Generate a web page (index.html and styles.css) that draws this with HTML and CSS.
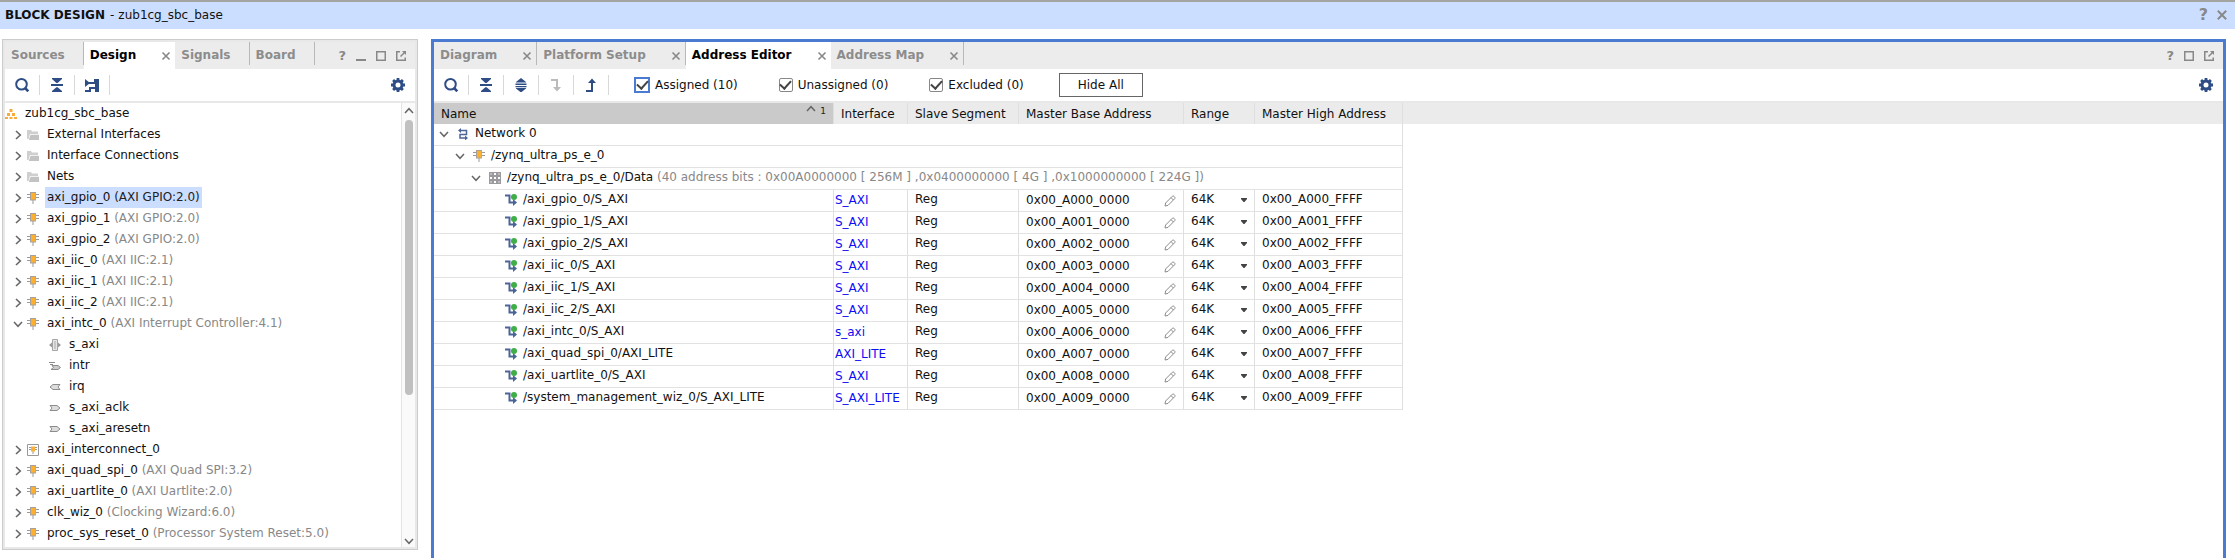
FILE: index.html
```html
<!DOCTYPE html>
<html lang="en">
<head>
<meta charset="utf-8">
<title>Block Design - zub1cg_sbc_base</title>
<link rel="stylesheet" href="styles.css">
</head>
<body>
<svg class="sprite" aria-hidden="true">
  <symbol id="search" viewBox="0 0 14 14"><circle cx="6.5" cy="6.3" r="5.3" fill="none" stroke="currentColor" stroke-width="2"/><path d="M10 10l3.3 3.3" stroke="currentColor" stroke-width="2.6"/></symbol>
  <symbol id="collapse" viewBox="0 0 14 14"><path d="M2 0h10v1L7.6 5H6.4L2 1zM1 6h12v2H1zM6.4 9.300h1.200L12 13v1H2v-1z" fill="currentColor"/></symbol>
  <symbol id="expand" viewBox="0 0 14 14"><path d="M7 0l5 4v.6H2V4zM1.500 5.500h11v1.400h-11zM1.500 8h11v1.300h-11zM2 10h10v.4L7 14.500 2 10.400z" fill="currentColor"/></symbol>
  <symbol id="hier" viewBox="0 0 14 14"><path d="M0 1l5 4-5 4zM1 4h9v2H1zM9 1h5v13h-4V6H9zM0 12h4V9h6v2H6v3H0z" fill="currentColor"/></symbol>
  <symbol id="down" viewBox="0 0 14 14"><path d="M2 1h7v8h3l-4 4.500L4 9h3V3H2z" fill="currentColor"/></symbol>
  <symbol id="up" viewBox="0 0 14 14"><path d="M2 14h7V5h3L8 .5 4 5h3v7H2z" fill="currentColor"/></symbol>
  <symbol id="gear" viewBox="0 0 14 14"><circle cx="7" cy="7" r="4" fill="none" stroke="currentColor" stroke-width="3"/><path d="M7 0v2.500M7 11.500V14M0 7h2.500M11.500 7H14M2.100 2.100l1.700 1.700M10.200 10.200l1.700 1.700M2.100 11.900l1.700-1.700M10.200 3.800l1.700-1.700" stroke="currentColor" stroke-width="2.800"/></symbol>
  <symbol id="x" viewBox="0 0 10 10"><path d="M1.500 1.500l7 7M8.500 1.500l-7 7" fill="none" stroke="currentColor" stroke-width="1.600"/></symbol>
  <symbol id="min" viewBox="0 0 10 10"><path d="M0 8h10v2H0z" fill="currentColor"/></symbol>
  <symbol id="max" viewBox="0 0 10 10"><path d="M.75.75h8.500v8.500H.75z" fill="none" stroke="currentColor" stroke-width="1.500"/></symbol>
  <symbol id="float" viewBox="0 0 10 10"><path d="M4 .75H.75v8.500h8.500V6.500M4.500 5.500L8.500 1.500" fill="none" stroke="currentColor" stroke-width="1.500"/><path d="M6 0h4v4z" fill="currentColor"/></symbol>
  <symbol id="right" viewBox="0 0 10 10"><path d="M3 1l4.300 4L3 9" fill="none" stroke="currentColor" stroke-width="1.600"/></symbol>
  <symbol id="open" viewBox="0 0 10 10"><path d="M1 3l4 4.300L9 3" fill="none" stroke="currentColor" stroke-width="1.500"/></symbol>
  <symbol id="root" viewBox="0 0 12 12"><path d="M4.500 1h3v3h-3zM2 5h3v3H2zM7 5h3v3H7zM0 9h3v2H0zM4.500 9h3v2h-3zM9 9h3v2H9z" fill="#f9ab3a"/></symbol>
  <symbol id="folder" viewBox="0 0 12 12"><path d="M0 1h4l1 1.500h6V5H3L1.500 10H0z" fill="#cfcfcf"/><path d="M3.500 5.800H12V11H1.800z" fill="#c3c3c3"/></symbol>
  <symbol id="ip" viewBox="0 0 12 12"><path d="M0 2.500h12M0 5.500h12" stroke="#9a9a9a"/><path d="M5.500 8h1v4h-1z" fill="#9a9a9a"/><path d="M3 0h6v8.500H3z" fill="#a8a09a"/><path d="M4 1h4.500v6.500H4z" fill="#fdb02f"/></symbol>
  <symbol id="ipbox" viewBox="0 0 12 12"><path d="M.5.5h11v11H.5z" fill="#fff" stroke="#999"/><path d="M2 3.500h8M2 5.500h8M6 7v3" stroke="#999"/><path d="M4 2.500h4v5H4z" fill="#fbb03b"/></symbol>
  <symbol id="bus" viewBox="0 0 12 12"><path d="M0 6l3-2.500v5zM12 6L9 3.500v5z" fill="#999"/><path d="M3.500.5h5v11h-5z" fill="#e6e6e6" stroke="#a4a4a4"/><path d="M5.500 2h1v8h-1z" fill="#aaa"/></symbol>
  <symbol id="intr" viewBox="0 0 12 12"><path d="M0 2.500h6M1 4.500h3M2 9.500h7l2.500-2-2.500-2H3l1.500 2z" fill="#ccc" stroke="#8c8c8c"/></symbol>
  <symbol id="out" viewBox="0 0 12 12"><path d="M11 3.500H4L1 6l3 2.500h7L9 6z" fill="#ddd" stroke="#8c8c8c"/></symbol>
  <symbol id="in" viewBox="0 0 12 12"><path d="M1 3.500h7L11 6 8 8.500H1L3 6z" fill="#ddd" stroke="#8c8c8c"/></symbol>
  <symbol id="net" viewBox="0 0 12 12"><path d="M3 2.500h6.500v4H3v3.500h7" fill="none" stroke="#4d6797" stroke-width="1.500"/><path d="M4 0v5L1 2.500zM8 7.500v5l3-2.500z" fill="#4d6797"/></symbol>
  <symbol id="grid" viewBox="0 0 12 12"><path d="M0 0h12v12H0z" fill="#9b9b9f"/><path d="M5 1h2v2H5zM1 5h2v2H1zM5 5h2v2H5zM9 5h2v2H9zM5 9h2v2H5z" fill="#fff"/><path d="M1 1h2v2H1zM9 1h2v2H9zM1 9h2v2H1zM9 9h2v2H9z" fill="#bbb"/></symbol>
  <symbol id="seg" viewBox="0 0 12 12"><path d="M0 1.500h4.500v7H9" fill="none" stroke="#4a6496" stroke-width="2"/><path d="M8 5v7l4-3.500z" fill="#4a6496"/><circle cx="9" cy="3.100" r="3" fill="#3fae49"/></symbol>
  <symbol id="pencil" viewBox="0 0 12 12"><path d="M1 11l.6-3L8.300 1.300q.8-.8 1.600 0l.8.8q.8.800 0 1.600L4 10.400zM7 2.600L9.400 5" fill="none" stroke="#8c8c8c"/></symbol>
  <symbol id="caret" viewBox="0 0 6 4"><path d="M0 0h6v1L3.500 4h-1L0 1z" fill="#444"/></symbol>
</svg>

<header class="titlebar">
  <h1 class="title"><b>BLOCK DESIGN</b><span>-</span><span>zub1cg_sbc_base</span></h1>
  <button class="tool help big" aria-label="Help">?</button>
  <button class="tool" aria-label="Close"><svg class="i12"><use href="#x"/></svg></button>
</header>

<main class="workspace">
  <section class="panel design">
    <div class="tabs">
      <button class="tab">Sources</button>
      <button class="tab active">Design<svg class="i10"><use href="#x"/></svg></button>
      <button class="tab">Signals</button>
      <button class="tab">Board</button>
      <div class="wintools">
        <button class="tool help" aria-label="Help">?</button>
        <button class="tool" aria-label="Minimize"><svg class="i10"><use href="#min"/></svg></button>
        <button class="tool" aria-label="Maximize"><svg class="i10"><use href="#max"/></svg></button>
        <button class="tool" aria-label="Float"><svg class="i10"><use href="#float"/></svg></button>
      </div>
    </div>
    <div class="toolbar">
      <button class="action" aria-label="Search"><svg class="i14"><use href="#search"/></svg></button>
      <button class="action" aria-label="Collapse all"><svg class="i14"><use href="#collapse"/></svg></button>
      <button class="action" aria-label="Show hierarchy"><svg class="i14"><use href="#hier"/></svg></button>
      <button class="tool gear" aria-label="Settings"><svg class="i14"><use href="#gear"/></svg></button>
    </div>
    <div class="treebox">
      <ul class="tree">
        <li class="root"><svg class="i12"><use href="#root"/></svg><span class="label">zub1cg_sbc_base</span></li>
        <li><svg class="i10"><use href="#right"/></svg><svg class="i12"><use href="#folder"/></svg><span class="label">External Interfaces</span></li>
        <li><svg class="i10"><use href="#right"/></svg><svg class="i12"><use href="#folder"/></svg><span class="label">Interface Connections</span></li>
        <li><svg class="i10"><use href="#right"/></svg><svg class="i12"><use href="#folder"/></svg><span class="label">Nets</span></li>
        <li class="selected"><svg class="i10"><use href="#right"/></svg><svg class="i12"><use href="#ip"/></svg><span class="label">axi_gpio_0 <i>(AXI GPIO:2.0)</i></span></li>
        <li><svg class="i10"><use href="#right"/></svg><svg class="i12"><use href="#ip"/></svg><span class="label">axi_gpio_1 <i>(AXI GPIO:2.0)</i></span></li>
        <li><svg class="i10"><use href="#right"/></svg><svg class="i12"><use href="#ip"/></svg><span class="label">axi_gpio_2 <i>(AXI GPIO:2.0)</i></span></li>
        <li><svg class="i10"><use href="#right"/></svg><svg class="i12"><use href="#ip"/></svg><span class="label">axi_iic_0 <i>(AXI IIC:2.1)</i></span></li>
        <li><svg class="i10"><use href="#right"/></svg><svg class="i12"><use href="#ip"/></svg><span class="label">axi_iic_1 <i>(AXI IIC:2.1)</i></span></li>
        <li><svg class="i10"><use href="#right"/></svg><svg class="i12"><use href="#ip"/></svg><span class="label">axi_iic_2 <i>(AXI IIC:2.1)</i></span></li>
        <li><svg class="i10"><use href="#open"/></svg><svg class="i12"><use href="#ip"/></svg><span class="label">axi_intc_0 <i>(AXI Interrupt Controller:4.1)</i></span></li>
        <li class="port"><svg class="i12"><use href="#bus"/></svg><span class="label">s_axi</span></li>
        <li class="port"><svg class="i12"><use href="#intr"/></svg><span class="label">intr</span></li>
        <li class="port"><svg class="i12"><use href="#out"/></svg><span class="label">irq</span></li>
        <li class="port"><svg class="i12"><use href="#in"/></svg><span class="label">s_axi_aclk</span></li>
        <li class="port"><svg class="i12"><use href="#in"/></svg><span class="label">s_axi_aresetn</span></li>
        <li><svg class="i10"><use href="#right"/></svg><svg class="i12"><use href="#ipbox"/></svg><span class="label">axi_interconnect_0</span></li>
        <li><svg class="i10"><use href="#right"/></svg><svg class="i12"><use href="#ip"/></svg><span class="label">axi_quad_spi_0 <i>(AXI Quad SPI:3.2)</i></span></li>
        <li><svg class="i10"><use href="#right"/></svg><svg class="i12"><use href="#ip"/></svg><span class="label">axi_uartlite_0 <i>(AXI Uartlite:2.0)</i></span></li>
        <li><svg class="i10"><use href="#right"/></svg><svg class="i12"><use href="#ip"/></svg><span class="label">clk_wiz_0 <i>(Clocking Wizard:6.0)</i></span></li>
        <li><svg class="i10"><use href="#right"/></svg><svg class="i12"><use href="#ip"/></svg><span class="label">proc_sys_reset_0 <i>(Processor System Reset:5.0)</i></span></li>
      </ul>
      <div class="scrollbar">
        <svg class="i10 flip"><use href="#open"/></svg>
        <div class="track"><div class="thumb"></div></div>
        <svg class="i10"><use href="#open"/></svg>
      </div>
    </div>
  </section>

  <section class="panel editor">
    <div class="tabs">
      <button class="tab">Diagram<svg class="i10"><use href="#x"/></svg></button>
      <button class="tab">Platform Setup<svg class="i10"><use href="#x"/></svg></button>
      <button class="tab active">Address Editor<svg class="i10"><use href="#x"/></svg></button>
      <button class="tab">Address Map<svg class="i10"><use href="#x"/></svg></button>
      <div class="wintools">
        <button class="tool help" aria-label="Help">?</button>
        <button class="tool" aria-label="Maximize"><svg class="i10"><use href="#max"/></svg></button>
        <button class="tool" aria-label="Float"><svg class="i10"><use href="#float"/></svg></button>
      </div>
    </div>
    <div class="toolbar">
      <button class="action" aria-label="Search"><svg class="i14"><use href="#search"/></svg></button>
      <button class="action" aria-label="Collapse all"><svg class="i14"><use href="#collapse"/></svg></button>
      <button class="action" aria-label="Expand all"><svg class="i14"><use href="#expand"/></svg></button>
      <button class="action off" aria-label="Assign"><svg class="i14"><use href="#down"/></svg></button>
      <button class="action" aria-label="Unassign"><svg class="i14"><use href="#up"/></svg></button>
      <div class="filters">
        <label class="check"><input class="focus" type="checkbox" checked>Assigned (10)</label>
        <label class="check"><input type="checkbox" checked>Unassigned (0)</label>
        <label class="check"><input type="checkbox" checked>Excluded (0)</label>
        <button class="hide">Hide All</button>
      </div>
      <button class="tool gear" aria-label="Settings"><svg class="i14"><use href="#gear"/></svg></button>
    </div>
    <table class="grid">
      <colgroup><col class="c-name"><col class="c-if"><col class="c-seg"><col class="c-base"><col class="c-range"><col class="c-high"><col></colgroup>
      <thead>
        <tr><th class="sorted"><div class="cell">Name<span class="sort"><svg class="i10 flip"><use href="#open"/></svg>1</span></div></th><th>Interface</th><th>Slave Segment</th><th>Master Base Address</th><th>Range</th><th>Master High Address</th><th class="rest"></th></tr>
      </thead>
      <tbody>
        <tr><td class="group" colspan="6"><div class="node n1"><svg class="i10"><use href="#open"/></svg><svg class="i12"><use href="#net"/></svg>Network 0</div></td></tr>
        <tr><td class="group" colspan="6"><div class="node n2"><svg class="i10"><use href="#open"/></svg><svg class="i12"><use href="#ip"/></svg>/zynq_ultra_ps_e_0</div></td></tr>
        <tr><td class="group" colspan="6"><div class="node n3"><svg class="i10"><use href="#open"/></svg><svg class="i12"><use href="#grid"/></svg><span>/zynq_ultra_ps_e_0/Data <i>(40 address bits : 0x00A0000000 [ 256M ] ,0x0400000000 [ 4G ] ,0x1000000000 [ 224G ])</i></span></div></td></tr>
        <tr><td><div class="node leaf"><svg class="i12"><use href="#seg"/></svg>/axi_gpio_0/S_AXI</div></td><td class="if"><a href="#">S_AXI</a></td><td>Reg</td><td class="base"><div class="cell">0x00_A000_0000<button class="tool" aria-label="Edit"><svg class="i12"><use href="#pencil"/></svg></button></div></td><td><div class="cell"><select aria-label="Range"><option>64K</option></select><svg class="caret"><use href="#caret"/></svg></div></td><td>0x00_A000_FFFF</td></tr>
        <tr><td><div class="node leaf"><svg class="i12"><use href="#seg"/></svg>/axi_gpio_1/S_AXI</div></td><td class="if"><a href="#">S_AXI</a></td><td>Reg</td><td class="base"><div class="cell">0x00_A001_0000<button class="tool" aria-label="Edit"><svg class="i12"><use href="#pencil"/></svg></button></div></td><td><div class="cell"><select aria-label="Range"><option>64K</option></select><svg class="caret"><use href="#caret"/></svg></div></td><td>0x00_A001_FFFF</td></tr>
        <tr><td><div class="node leaf"><svg class="i12"><use href="#seg"/></svg>/axi_gpio_2/S_AXI</div></td><td class="if"><a href="#">S_AXI</a></td><td>Reg</td><td class="base"><div class="cell">0x00_A002_0000<button class="tool" aria-label="Edit"><svg class="i12"><use href="#pencil"/></svg></button></div></td><td><div class="cell"><select aria-label="Range"><option>64K</option></select><svg class="caret"><use href="#caret"/></svg></div></td><td>0x00_A002_FFFF</td></tr>
        <tr><td><div class="node leaf"><svg class="i12"><use href="#seg"/></svg>/axi_iic_0/S_AXI</div></td><td class="if"><a href="#">S_AXI</a></td><td>Reg</td><td class="base"><div class="cell">0x00_A003_0000<button class="tool" aria-label="Edit"><svg class="i12"><use href="#pencil"/></svg></button></div></td><td><div class="cell"><select aria-label="Range"><option>64K</option></select><svg class="caret"><use href="#caret"/></svg></div></td><td>0x00_A003_FFFF</td></tr>
        <tr><td><div class="node leaf"><svg class="i12"><use href="#seg"/></svg>/axi_iic_1/S_AXI</div></td><td class="if"><a href="#">S_AXI</a></td><td>Reg</td><td class="base"><div class="cell">0x00_A004_0000<button class="tool" aria-label="Edit"><svg class="i12"><use href="#pencil"/></svg></button></div></td><td><div class="cell"><select aria-label="Range"><option>64K</option></select><svg class="caret"><use href="#caret"/></svg></div></td><td>0x00_A004_FFFF</td></tr>
        <tr><td><div class="node leaf"><svg class="i12"><use href="#seg"/></svg>/axi_iic_2/S_AXI</div></td><td class="if"><a href="#">S_AXI</a></td><td>Reg</td><td class="base"><div class="cell">0x00_A005_0000<button class="tool" aria-label="Edit"><svg class="i12"><use href="#pencil"/></svg></button></div></td><td><div class="cell"><select aria-label="Range"><option>64K</option></select><svg class="caret"><use href="#caret"/></svg></div></td><td>0x00_A005_FFFF</td></tr>
        <tr><td><div class="node leaf"><svg class="i12"><use href="#seg"/></svg>/axi_intc_0/S_AXI</div></td><td class="if"><a href="#">s_axi</a></td><td>Reg</td><td class="base"><div class="cell">0x00_A006_0000<button class="tool" aria-label="Edit"><svg class="i12"><use href="#pencil"/></svg></button></div></td><td><div class="cell"><select aria-label="Range"><option>64K</option></select><svg class="caret"><use href="#caret"/></svg></div></td><td>0x00_A006_FFFF</td></tr>
        <tr><td><div class="node leaf"><svg class="i12"><use href="#seg"/></svg>/axi_quad_spi_0/AXI_LITE</div></td><td class="if"><a href="#">AXI_LITE</a></td><td>Reg</td><td class="base"><div class="cell">0x00_A007_0000<button class="tool" aria-label="Edit"><svg class="i12"><use href="#pencil"/></svg></button></div></td><td><div class="cell"><select aria-label="Range"><option>64K</option></select><svg class="caret"><use href="#caret"/></svg></div></td><td>0x00_A007_FFFF</td></tr>
        <tr><td><div class="node leaf"><svg class="i12"><use href="#seg"/></svg>/axi_uartlite_0/S_AXI</div></td><td class="if"><a href="#">S_AXI</a></td><td>Reg</td><td class="base"><div class="cell">0x00_A008_0000<button class="tool" aria-label="Edit"><svg class="i12"><use href="#pencil"/></svg></button></div></td><td><div class="cell"><select aria-label="Range"><option>64K</option></select><svg class="caret"><use href="#caret"/></svg></div></td><td>0x00_A008_FFFF</td></tr>
        <tr><td><div class="node leaf"><svg class="i12"><use href="#seg"/></svg>/system_management_wiz_0/S_AXI_LITE</div></td><td class="if"><a href="#">S_AXI_LITE</a></td><td>Reg</td><td class="base"><div class="cell">0x00_A009_0000<button class="tool" aria-label="Edit"><svg class="i12"><use href="#pencil"/></svg></button></div></td><td><div class="cell"><select aria-label="Range"><option>64K</option></select><svg class="caret"><use href="#caret"/></svg></div></td><td>0x00_A009_FFFF</td></tr>
      </tbody>
    </table>
  </section>
</main>
</body>
</html>
```

FILE: styles.css
```css
* { box-sizing: border-box; }
body {
  margin: 0;
  height: 100vh;
  overflow: hidden;
  display: flex;
  flex-direction: column;
  background: #fff;
  color: #111;
  font: 12px/20px "DejaVu Sans", sans-serif;
}
.sprite { position: absolute; width: 0; height: 0; }
svg { flex: none; display: block; }
.i10 { width: 10px; height: 10px; }
.i12 { width: 12px; height: 12px; }
.i14 { width: 14px; height: 14px; }
.flip { transform: rotate(180deg); }
button, select { font: inherit; color: inherit; margin: 0; padding: 0; border: 0; background: none; }
i { font-style: normal; color: #888; }

.titlebar {
  display: flex;
  align-items: center;
  gap: 8px;
  height: 29px;
  padding: 0 7px 2px 5px;
  border-top: 2px solid #a4a4a0;
  background: #ccdeff;
}
.title { flex: 1; display: flex; gap: 4px; margin: 0; font-size: 12px; font-weight: normal; }
.title b { margin-right: 1px; }
.tool { color: #888; display: flex; align-items: center; justify-content: center; }
.help { font-weight: bold; font-size: 13px; line-height: 16px; }
.help.big { font-size: 16px; }

.workspace { flex: 1; display: flex; gap: 13px; padding: 10px 9px 0 2px; min-height: 0; }
.panel { display: flex; flex-direction: column; min-width: 0; }
.design {
  flex: 0 0 416px;
  margin-bottom: 8px;
  border: 1px solid #ccc;
  box-shadow: inset 0 0 0 2px #e8e8e8;
  padding: 2px;
}
.editor { flex: 1; border: 3px solid #4b7bd0; border-bottom: 0; }

.tabs { flex: none; display: flex; height: 27px; background: #ececec; color: #8c8c8c; }
.tab {
  display: flex;
  align-items: center;
  margin-bottom: 4px;
  padding: 2px 18px 0 6px;
  border-right: 1px solid #b8b8b8;
  font-weight: bold;
}
.tab svg { margin: 2px -14px 0 25px; color: #888; }
.tab.active { margin-bottom: 0; padding-bottom: 4px; background: #fff; color: #000; border-right: 0; }
.wintools { flex: 1; display: flex; align-items: center; justify-content: flex-end; gap: 10px; padding-right: 9px; }

.toolbar { flex: none; display: flex; align-items: center; height: 34px; border-bottom: 2px solid #e8e8e8; }
.action {
  display: flex;
  align-items: center;
  justify-content: center;
  width: 35px;
  height: 20px;
  border-right: 1px solid #d8d8d8;
  color: #2f4d85;
}
.action.off { color: #bbb; }
.gear { margin: 0 10px 0 auto; color: #2f4d85; }
.filters { display: flex; align-items: center; padding-left: 25px; }
.check { display: flex; align-items: center; gap: 5px; margin-right: 41px; }
.check input {
  appearance: none;
  width: 14px;
  height: 14px;
  margin: 0;
  border: 1px solid #888;
  border-radius: 2px;
  display: grid;
  place-items: center;
}
.check input.focus { width: 16px; height: 16px; border: 2px solid #4b7bd0; border-radius: 0; }
.check input::before {
  content: "";
  width: 9px;
  height: 5px;
  margin-bottom: 3px;
  border: solid #444;
  border-width: 0 0 2px 2px;
  transform: rotate(-48deg);
}
.hide { width: 84px; height: 24px; margin-left: -6px; border: 1px solid #666; }

.treebox { flex: 1; display: flex; min-height: 0; }
.tree { flex: 1; margin: 0; padding: 0; list-style: none; }
.tree li { display: flex; align-items: center; height: 21px; padding-left: 8px; color: #111; }
.tree li > svg { margin-right: 4px; color: #666; }
.tree li > svg.i12 { margin-right: 6px; }
.tree li.root { padding-left: 0; }
.tree li.port { padding-left: 44px; }
.label { padding: 0 2px; line-height: 21px; white-space: nowrap; }
.selected .label { background: #ccdeff; }
.selected i { color: #222; }
.scrollbar {
  display: flex;
  flex-direction: column;
  align-items: center;
  width: 14px;
  padding: 3px 0 1px;
  border-left: 1px solid #e4e4e4;
  background: #fafafa;
  color: #666;
}
.track { flex: 1; align-self: stretch; display: flex; justify-content: center; padding-top: 4px; }
.thumb { width: 8px; height: 66%; border-radius: 4px; background: #c0c0c0; }

.grid { width: 100%; table-layout: fixed; border-spacing: 0; }
.c-name { width: 400px; }
.c-if { width: 74px; }
.c-seg { width: 111px; }
.c-base { width: 165px; }
.c-range { width: 71px; }
.c-high { width: 148px; }
th, td { padding: 0 0 0 7px; text-align: left; white-space: nowrap; border-right: 1px solid #dfdfdf; }
th { height: 21px; background: #ebebeb; font-weight: normal; }
th.sorted { background: #cacaca; }
th.rest { border-right: 0; }
td { height: 22px; line-height: 19px; padding-bottom: 2px; border-bottom: 1px solid #e2e2e2; }
td.if, td.base { padding-bottom: 0; }
td.if { padding-left: 1px; }
td a { color: #0c0cf5; text-decoration: none; }
.cell { display: flex; align-items: center; justify-content: space-between; padding-right: 7px; }
.sort { display: flex; align-self: flex-start; font-size: 9px; line-height: 14px; gap: 4px; color: #222; }
.sort svg { color: #666; }
.node { display: flex; align-items: center; }
.node .i10 { margin-right: 8px; color: #666; }
.node .i12 { margin-right: 6px; }
td:first-child { padding-left: 0; }
.n1 { padding-left: 5px; }
.n2 { padding-left: 21px; }
.n3 { padding-left: 37px; }
.leaf { padding-left: 71px; }
select { appearance: none; width: 44px; height: 19px; }
.caret { width: 6px; height: 4px; }
```
